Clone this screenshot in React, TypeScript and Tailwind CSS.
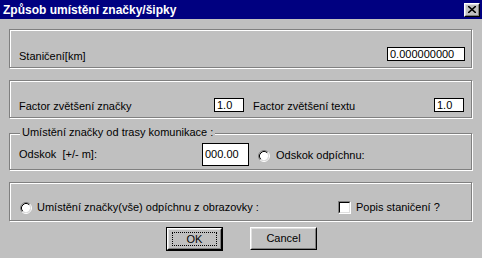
import React from "react";

const font = { fontFamily: '"Liberation Sans", Arial, sans-serif' };

function Radio() {
  return (
    <svg width="12" height="12" viewBox="0 0 12 12" className="shrink-0">
      <circle cx="6" cy="6" r="4.2" fill="#fff" />
      <path d="M2.11 9.89 A5.5 5.5 0 0 1 9.89 2.11" stroke="#808080" fill="none" />
      <path d="M9.89 2.11 A5.5 5.5 0 0 1 2.11 9.89" stroke="#fff" fill="none" />
      <path d="M2.82 9.18 A4.5 4.5 0 0 1 9.18 2.82" stroke="#000" fill="none" />
      <path d="M9.18 2.82 A4.5 4.5 0 0 1 2.82 9.18" stroke="#dfdfdf" fill="none" />
    </svg>
  );
}

function Checkbox() {
  return (
    <div className="w-[13px] h-[13px] shrink-0 border border-t-[#808080] border-l-[#808080] border-b-white border-r-white">
      <div className="w-full h-full bg-white border border-t-black border-l-black border-b-[#dfdfdf] border-r-[#dfdfdf]" />
    </div>
  );
}

function Field({ value, w, h = "h-[14px]" }: { value: string; w: string; h?: string }) {
  return (
    <div className={`${w} ${h} shrink-0 bg-white border border-black flex items-center pl-[2px] text-[11px] leading-none text-black`}>
      {value}
    </div>
  );
}

function Raised({ children, className }: { children?: React.ReactNode; className: string }) {
  return (
    <div className={`${className} border border-t-white border-l-white border-b-black border-r-black bg-[#c0c0c0]`}>
      <div className="w-full h-full border border-t-[#dfdfdf] border-l-[#dfdfdf] border-b-[#808080] border-r-[#808080] flex items-center justify-center">
        {children}
      </div>
    </div>
  );
}

const group = "border border-[#808080] shadow-[1px_1px_0_#fff,inset_1px_1px_0_#fff]";

export default function App() {
  return (
    <div className="w-[482px] h-[258px] bg-[#c0c0c0] text-black text-[11px] overflow-hidden" style={font}>
      {/* Title bar */}
      <div className="h-[19px] bg-[#000080] flex items-center justify-between pl-[3px] pr-[2px]">
        <span className="text-white font-bold text-[12px] leading-none">Způsob umístění značky/šipky</span>
        <Raised className="w-[16px] h-[14px]">
          <svg width="8" height="7" viewBox="0 0 8 7">
            <path d="M0 0 L8 7 M8 0 L0 7" stroke="#000" strokeWidth="1.6" />
          </svg>
        </Raised>
      </div>

      <div className="pl-[9px] pr-[10px] pt-[10px] flex flex-col">
        {/* Station */}
        <div className={`${group} h-[39px] pt-[17px] pl-[9px] pr-[6px] flex items-start justify-between`}>
          <span className="leading-[13px] mt-[3px]">Staničení[km]</span>
          <Field value="0.000000000" w="w-[78px]" />
        </div>

        {/* Factors */}
        <div className={`${group} mt-[12px] h-[38px] pt-[17px] pl-[9px] flex items-start`}>
          <span className="w-[195px] leading-[13px] mt-[2px]">Factor zvětšení značky</span>
          <Field value="1.0" w="w-[30px]" />
          <span className="ml-[9px] w-[181px] leading-[13px] mt-[2px]">Factor zvětšení textu</span>
          <Field value="1.0" w="w-[30px]" />
        </div>

        {/* Offset */}
        <div className={`${group} relative mt-[15px] h-[37px] pt-[9px] pl-[9px] flex items-center`}>
          <span className="absolute left-[10px] top-[-8px] px-[2px] bg-[#c0c0c0] leading-[13px]">
            Umístění značky od trasy komunikace :
          </span>
          <div className="flex items-start self-start">
            <span className="w-[183px] leading-[13px] mt-[5px] whitespace-pre">Odskok  [+/- m]:</span>
            <Field value="000.00" w="w-[47px]" h="h-[23px]" />
            <div className="ml-[9px] mt-[6px] flex items-center gap-[6px]">
              <Radio />
              <span className="leading-[13px]">Odskok odpíchnu:</span>
            </div>
          </div>
        </div>

        {/* Screen pick */}
        <div className={`${group} mt-[12px] h-[39px] pt-[18px] pl-[10px] flex items-start`}>
          <div className="w-[318px] flex items-center gap-[5px]">
            <Radio />
            <span className="leading-[13px]">Umístění značky(vše) odpíchnu z obrazovky :</span>
          </div>
          <div className="flex items-center gap-[5px]">
            <Checkbox />
            <span className="leading-[13px]">Popis staničení ?</span>
          </div>
        </div>

        {/* Buttons */}
        <div className="mt-[6px] pl-[157px] flex items-start gap-[27px]">
          <div className="w-[57px] h-[24px] border border-black">
            <Raised className="w-full h-full">
              <div className="w-[45px] h-[14px] border border-dotted border-black flex items-center justify-center leading-none">
                OK
              </div>
            </Raised>
          </div>
          <Raised className="w-[67px] h-[23px]">
            <span className="leading-none">Cancel</span>
          </Raised>
        </div>
      </div>
    </div>
  );
}
